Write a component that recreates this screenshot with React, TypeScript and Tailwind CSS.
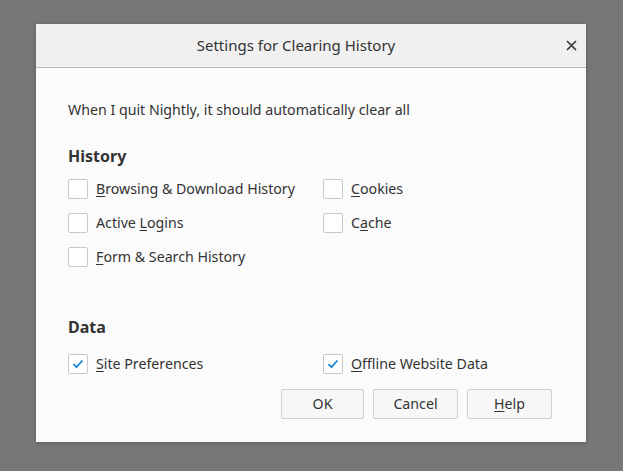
import React from "react";

function Box({ checked }: { checked?: boolean }) {
  return (
    <div className="w-[20px] h-[20px] border border-[#c8c8c8] bg-white rounded-[2px] flex items-center justify-center shrink-0">
      {checked && (
        <svg width="12" height="10" viewBox="0 0 12 10">
          <path d="M1.5 5.2 L4.5 8.2 L10.5 1.5" fill="none" stroke="#1e88d4" strokeWidth="1.8" />
        </svg>
      )}
    </div>
  );
}

function Item({ pre, acc, post, checked }: { pre: string; acc: string; post: string; checked?: boolean }) {
  return (
    <div className="flex items-center gap-[8px] h-[34px]">
      <Box checked={checked} />
      <span>
        {pre}
        <span className="underline underline-offset-2">{acc}</span>
        {post}
      </span>
    </div>
  );
}

export default function App() {
  return (
    <div
      className="w-[623px] h-[471px] bg-[#777777] pt-[24px] pl-[36px] text-[#333333] text-[14.2px]"
      style={{ fontFamily: '"Noto Sans", "Open Sans", sans-serif' }}
    >
      <div className="w-[550px] h-[418px] bg-[#fbfbfb] flex flex-col shadow-[0_1px_4px_rgba(0,0,0,0.25)]">
        <div className="h-[44px] bg-[#f0f0f0] border-b border-[#b8b8b8] flex items-center justify-center relative shrink-0 pr-[30px]">
          <span className="text-[15px] text-[#333]">Settings for Clearing History</span>
          <svg className="absolute right-[9px] top-[16px]" width="11" height="11" viewBox="0 0 11 11">
            <path d="M1 1 L10 10 M10 1 L1 10" stroke="#333" strokeWidth="1.6" />
          </svg>
        </div>
        <div className="flex flex-col pl-[32px] pr-[34px]">
          <div className="h-[20px] mt-[32px] flex items-center">When I quit Nightly, it should automatically clear all</div>
          <div className="h-[20px] mt-[26px] flex items-center text-[16px] font-bold">History</div>
          <div className="flex mt-[6px]">
            <div className="w-[255px] flex flex-col">
              <Item pre="" acc="B" post="rowsing & Download History" />
              <Item pre="Active " acc="L" post="ogins" />
              <Item pre="" acc="F" post="orm & Search History" />
            </div>
            <div className="flex flex-col">
              <Item pre="" acc="C" post="ookies" />
              <Item pre="C" acc="a" post="che" />
            </div>
          </div>
          <div className="h-[20px] mt-[43px] flex items-center text-[16px] font-bold">Data</div>
          <div className="flex mt-[10px]">
            <div className="w-[255px]">
              <Item pre="" acc="S" post="ite Preferences" checked />
            </div>
            <Item pre="" acc="O" post="ffline Website Data" checked />
          </div>
          <div className="flex justify-end gap-[9px] mt-[8px]">
            <button className="w-[83px] h-[30px] border border-[#d0d0d0] bg-[#f7f7f7] rounded-[2px]">OK</button>
            <button className="w-[85px] h-[30px] border border-[#d0d0d0] bg-[#f7f7f7] rounded-[2px]">Cancel</button>
            <button className="w-[85px] h-[30px] border border-[#d0d0d0] bg-[#f7f7f7] rounded-[2px]">
              <span className="underline underline-offset-2">H</span>elp
            </button>
          </div>
        </div>
      </div>
    </div>
  );
}
